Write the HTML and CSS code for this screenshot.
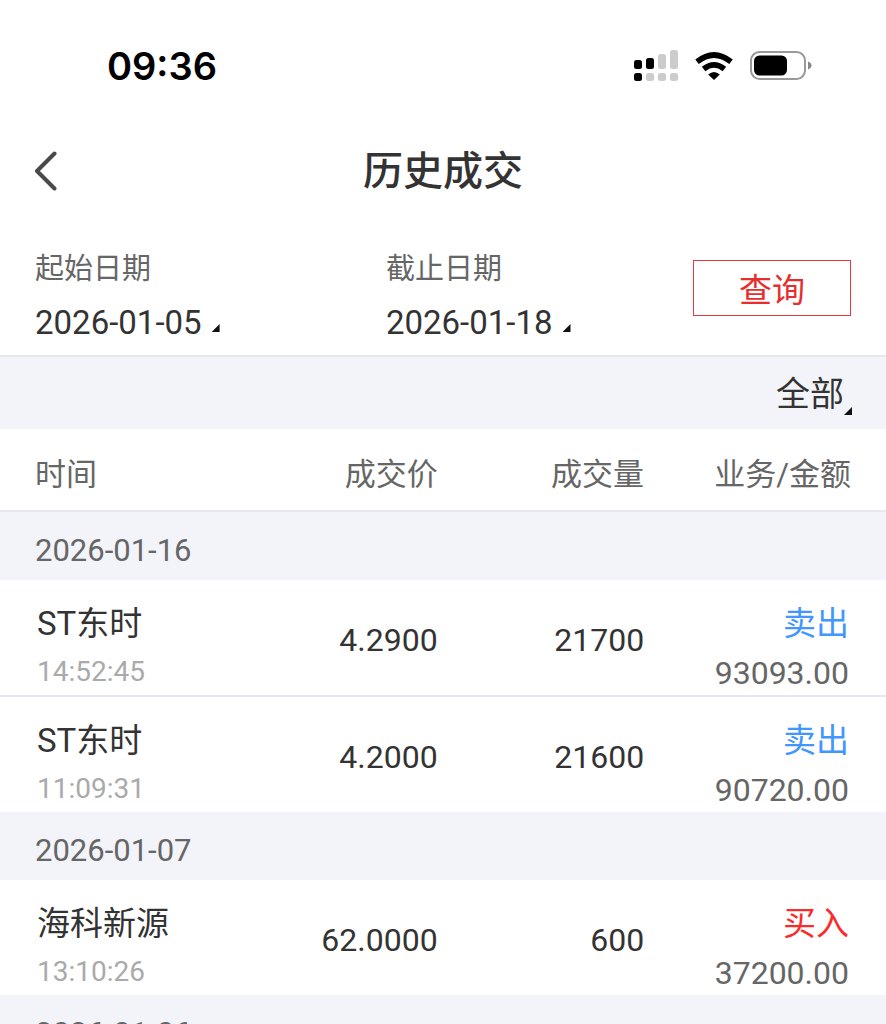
FILE: index.html
```html
<!DOCTYPE html>
<html lang="zh-CN">
<head>
    <meta charset="UTF-8">
    <meta name="viewport" content="width=device-width, initial-scale=1.0">
    <title>历史成交</title>
    <link rel="stylesheet" href="styles.css">
</head>
<body>
    <div class="status-bar">
        <span class="clock">09:36</span>
        <div class="status-icons">
            <svg width="44" height="32" viewBox="0 0 44 32">
                <g fill="#000">
                    <rect x="0" y="10" width="8" height="9" rx="2.5"/>
                    <rect x="12" y="8" width="8" height="11" rx="2.5"/>
                    <rect x="0" y="23" width="8" height="8" rx="2.5"/>
                </g>
                <g fill="#ccc">
                    <rect x="24" y="4" width="8" height="15" rx="2.5"/>
                    <rect x="36" y="0" width="8" height="19" rx="2.5"/>
                    <rect x="12" y="23" width="8" height="8" rx="2.5"/>
                    <rect x="24" y="23" width="8" height="8" rx="2.5"/>
                    <rect x="36" y="23" width="8" height="8" rx="2.5"/>
                </g>
            </svg>
            <svg width="38" height="28" viewBox="0 0 38 28">
                <g fill="none" stroke="#000" stroke-width="5.6">
                    <path d="M2 9.8 Q19 -3.8 36 9.8"/>
                    <path d="M8.6 17 Q19 8.8 29.4 17"/>
                </g>
                <path d="M19 28 L13.2 22.4 Q19 17.4 24.8 22.4 Z" fill="#000"/>
            </svg>
            <svg width="62" height="30" viewBox="0 0 62 30">
                <rect x="1" y="1" width="54" height="27" rx="8.5" fill="none" stroke="#999" stroke-width="2"/>
                <rect x="4" y="4.5" width="33" height="20" rx="5.5" fill="#000"/>
                <path d="M58 10.5 Q61.5 12 61.5 14.5 Q61.5 17 58 18.5 Z" fill="#888"/>
            </svg>
        </div>
    </div>

    <header class="title-bar">
        <button type="button" class="back" aria-label="返回">
            <svg width="24" height="40" viewBox="0 0 24 40">
                <path d="M20.5 2.5 L3 20 L20.5 37.5" fill="none" stroke="#4a4a4a" stroke-width="4" stroke-linecap="round" stroke-linejoin="round"/>
            </svg>
        </button>
        <h1>历史成交</h1>
    </header>

    <form class="filter">
        <div class="date-field">
            <label for="startDate">起始日期</label>
            <button type="button" id="startDate" class="date">2026-01-05</button>
        </div>
        <div class="date-field">
            <label for="endDate">截止日期</label>
            <button type="button" id="endDate" class="date">2026-01-18</button>
        </div>
        <button type="submit" class="query">查询</button>
    </form>

    <div class="type-bar">
        <div class="type-select">
            <select aria-label="业务类型">
                <option>全部</option>
                <option>买入</option>
                <option>卖出</option>
            </select>
        </div>
    </div>

    <table class="deals">
        <thead>
            <tr>
                <th class="col-name">时间</th>
                <th class="col-price">成交价</th>
                <th class="col-volume">成交量</th>
                <th class="col-amount">业务/金额</th>
            </tr>
        </thead>
        <tbody>
            <tr class="day"><th colspan="4">2026-01-16</th></tr>
            <tr class="deal">
                <td><div class="name">ST东时</div><div class="time">14:52:45</div></td>
                <td class="num">4.2900</td>
                <td class="num">21700</td>
                <td><div class="side sell">卖出</div><div class="amount">93093.00</div></td>
            </tr>
            <tr class="deal">
                <td><div class="name">ST东时</div><div class="time">11:09:31</div></td>
                <td class="num">4.2000</td>
                <td class="num">21600</td>
                <td><div class="side sell">卖出</div><div class="amount">90720.00</div></td>
            </tr>
        </tbody>
        <tbody>
            <tr class="day"><th colspan="4">2026-01-07</th></tr>
            <tr class="deal">
                <td><div class="name">海科新源</div><div class="time">13:10:26</div></td>
                <td class="num">62.0000</td>
                <td class="num">600</td>
                <td><div class="side buy">买入</div><div class="amount">37200.00</div></td>
            </tr>
        </tbody>
        <tbody>
            <tr class="day"><th colspan="4">2026-01-06</th></tr>
        </tbody>
    </table>
</body>
</html>
```
FILE: styles.css
```css
* {
    box-sizing: border-box;
}
body {
    margin: 0;
    background-color: #fff;
    color: #333;
    font-family: Roboto, "Noto Sans CJK SC", sans-serif;
}
button,
select {
    margin: 0;
    padding: 0;
    border: none;
    background: none;
    color: inherit;
    font: inherit;
    cursor: pointer;
}
svg {
    display: block;
}

/* 状态栏 */
.status-bar {
    display: flex;
    justify-content: space-between;
    align-items: center;
    height: 132px;
    padding: 0 74px 0 107px;
}
.clock {
    color: #000;
    font-family: Inter, sans-serif;
    font-size: 38px;
    font-weight: 600;
}
.status-icons {
    display: flex;
    align-items: center;
    gap: 17px;
}

/* 标题栏 */
.title-bar {
    display: grid;
    grid-template-columns: 60px 1fr 60px;
    align-items: center;
    height: 78px;
    padding: 0 34px;
}
.title-bar h1 {
    margin: 0;
    padding-top: 2px;
    text-align: center;
    font-size: 40px;
    font-weight: 500;
    line-height: 56px;
}

/* 查询条件 */
.filter {
    display: flex;
    align-items: flex-end;
    height: 147px;
    padding: 0 35px;
    border-bottom: 2px solid #e4e6ee;
}
.date-field {
    flex: 0 0 43%;
}
.date-field + .date-field {
    flex: 1;
}
.date-field label {
    display: block;
    color: #666;
    font-size: 29px;
    line-height: 44px;
}
.date {
    display: flex;
    align-items: center;
    gap: 10px;
    font-size: 33px;
    line-height: 64px;
}
.date::after,
.type-select::after {
    content: "";
    width: 8px;
    height: 8px;
    background-color: #111;
    clip-path: polygon(100% 0, 100% 100%, 0 100%);
}
.date::after {
    margin-top: 10px;
}
.query {
    width: 158px;
    height: 56px;
    margin-bottom: 39px;
    border: 1px solid #e8393a;
    color: #e62e2e;
    font-size: 33px;
}

/* 业务类型 */
.type-bar {
    display: flex;
    justify-content: flex-end;
    height: 72px;
    padding: 0 34px;
    background-color: #f3f4f9;
}
.type-select {
    display: flex;
    align-items: center;
}
.type-select select {
    appearance: none;
    padding-top: 2px;
    font-size: 34px;
}
.type-select::after {
    margin-top: 36px;
}

/* 成交列表 */
.deals {
    width: 100%;
    table-layout: fixed;
    border-spacing: 0;
}
.deals th,
.deals td {
    padding: 0;
    text-align: right;
    font-weight: 400;
}
.deals th:first-child,
.deals td:first-child {
    padding-left: 35px;
    text-align: left;
}
.deals thead th {
    height: 83px;
    padding-top: 4px;
    border-bottom: 2px solid #e6e8ee;
    color: #666;
    font-size: 31px;
}
.col-name {
    width: 30%;
}
.col-price {
    width: 19.4%;
}
.col-volume {
    width: 23.3%;
}
.deals .col-amount {
    padding-right: 35px;
}
.deals .day th {
    height: 68px;
    padding-top: 8px;
    background-color: #f3f4f9;
    color: #666;
    font-size: 31px;
}
.deals .deal td {
    height: 116px;
    border-bottom: 2px solid #e6e8ee;
}
.deals .deal:last-child td {
    height: 115px;
    border-bottom: none;
}
.deals .deal td:first-child {
    padding-left: 37px;
}
.deals .deal td:last-child {
    padding-right: 37px;
}
.deals .deal .num {
    padding-top: 4px;
    font-size: 32px;
}
.deals .deal td:first-child,
.deals .deal td:last-child {
    vertical-align: top;
}
.name,
.side {
    padding-top: 20px;
    font-size: 33px;
    line-height: 48px;
}
.time {
    color: #aaa;
    font-size: 28px;
    line-height: 47px;
}
.amount {
    padding-top: 4px;
    color: #666;
    font-size: 32px;
    line-height: 43px;
}
.sell {
    color: #4296ff;
}
.buy {
    color: #fc2b2b;
}
```
